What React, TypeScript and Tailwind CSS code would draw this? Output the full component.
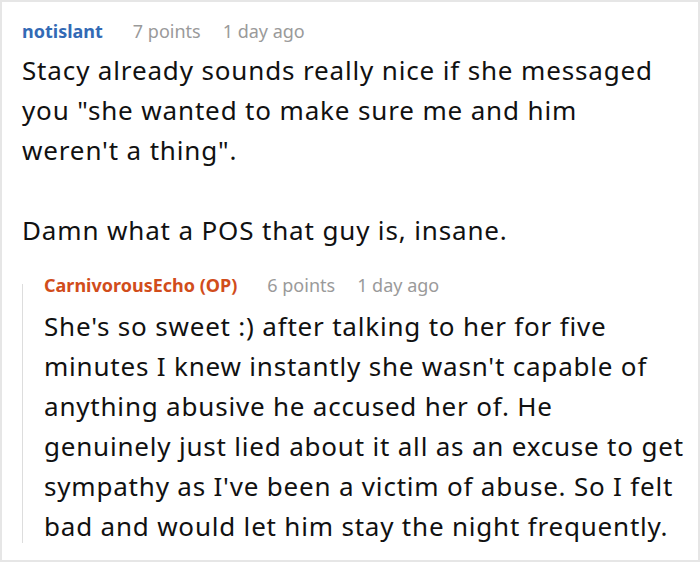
export default function App() {
  const font = { fontFamily: '"Noto Sans", "Open Sans", sans-serif' };
  return (
    <div className="w-[700px] h-[562px] bg-white border-2 border-[#e6e6e6] overflow-hidden" style={font}>
      <div className="pl-5 pt-[17px]">
        <div className="flex items-center h-6 text-[18px]">
          <span className="font-bold text-[#336ab5]">notislant</span>
          <span className="ml-[30px] text-[#9a9a9a]">7 points</span>
          <span className="ml-[22px] text-[#9a9a9a]">1 day ago</span>
        </div>
        <div className="mt-[7px] text-[26px] leading-[40px] tracking-[0.85px] text-[#111] w-[642px]">
          <p>Stacy already sounds really nice if she messaged you "she wanted to make sure me and him weren't a thing".</p>
          <p className="mt-10">Damn what a POS that guy is, insane.</p>
        </div>
        <div className="flex mt-[23px]">
          <div className="w-px bg-[#dddddd] mt-[11px] mb-[3px]" />
          <div className="pl-[21px]">
            <div className="flex items-center h-6 text-[18px]">
              <span className="font-bold text-[#d14d1b]">CarnivorousEcho (OP)</span>
              <span className="ml-[30px] text-[#9a9a9a]">6 points</span>
              <span className="ml-[22px] text-[#9a9a9a]">1 day ago</span>
            </div>
            <div className="mt-[9px] text-[26px] leading-[40px] tracking-[0.8px] text-[#111] w-[642px]">
              She's so sweet :) after talking to her for five minutes I knew instantly she wasn't capable of anything abusive he accused her of. He genuinely just lied about it all as an excuse to get sympathy as I've been a victim of abuse. So I felt bad and would let him stay the night frequently.
            </div>
          </div>
        </div>
      </div>
    </div>
  );
}
